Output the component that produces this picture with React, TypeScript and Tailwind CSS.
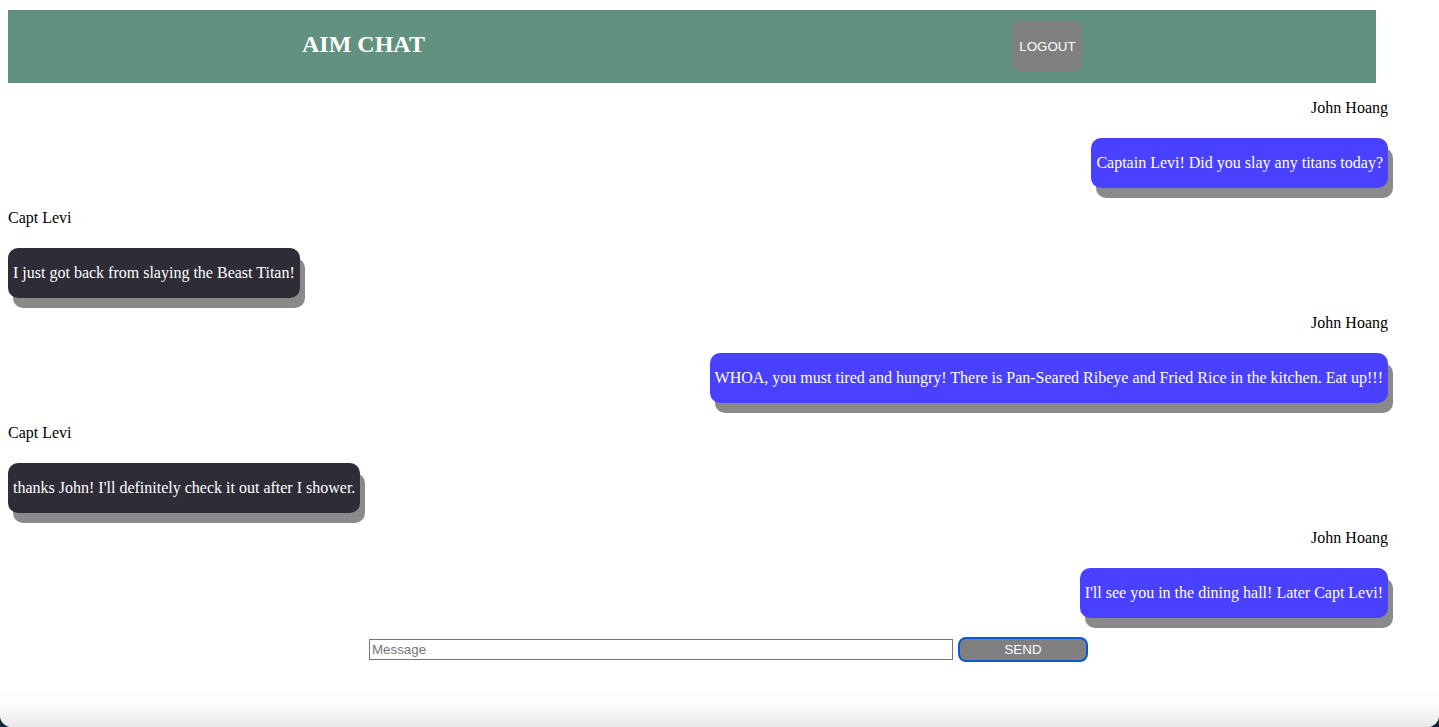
import React from 'react';

type Msg = { from: string; text: string; mine: boolean };

const messages: Msg[] = [
  { from: 'John Hoang', text: 'Captain Levi! Did you slay any titans today?', mine: true },
  { from: 'Capt Levi', text: 'I just got back from slaying the Beast Titan!', mine: false },
  {
    from: 'John Hoang',
    text: 'WHOA, you must tired and hungry! There is Pan-Seared Ribeye and Fried Rice in the kitchen. Eat up!!!',
    mine: true,
  },
  { from: 'Capt Levi', text: "thanks John! I'll definitely check it out after I shower.", mine: false },
  { from: 'John Hoang', text: "I'll see you in the dining hall! Later Capt Levi!", mine: true },
];

const serif = { fontFamily: '"Liberation Serif", "Times New Roman", serif' };

const Message: React.FC<{ msg: Msg; last: boolean }> = ({ msg, last }) => (
  <div className={`${last ? '' : msg.mine ? 'mb-[20px]' : 'mb-[15px]'}`}>
    <div className={`text-[16px] leading-[18px] pt-[1px] text-black ${msg.mine ? 'text-right' : 'text-left'}`}>
      {msg.from}
    </div>
    <div
      className={`mt-[21px] w-fit h-[50px] flex items-center px-[5px] rounded-[10px] text-white text-[16px] leading-[18px] whitespace-nowrap shadow-[5px_10px_0_0_#8a8a8a] ${
        msg.mine ? 'ml-auto bg-[#4a40ff]' : 'bg-[#2e2d37]'
      }`}
    >
      {msg.text}
    </div>
  </div>
);

export default function App() {
  return (
    <div className="min-h-screen bg-[#12263d]">
      <div className="min-h-screen bg-white rounded-b-[12px] flex flex-col overflow-hidden" style={serif}>
        <div className="px-2 pt-[10px]">
          <header className="w-[1368px] h-[73px] bg-[#62917f] flex items-center justify-around">
            <h2 className="text-[24px] font-bold text-white leading-none mb-[5px]">AIM CHAT</h2>
            <button
              className="w-[69px] h-[51px] rounded-[8px] bg-[#808080] text-white text-[13.33px]"
              style={{ fontFamily: '"Liberation Sans", Arial, sans-serif' }}
            >
              LOGOUT
            </button>
          </header>

          <div className="w-[1380px] mt-[15px]">
            {messages.map((m, i) => (
              <Message key={i} msg={m} last={i === messages.length - 1} />
            ))}
          </div>

          <form
            className="mt-[19px] pl-[361px] flex items-center gap-[5px]"
            style={{ fontFamily: '"Liberation Sans", Arial, sans-serif' }}
            onSubmit={(e) => e.preventDefault()}
          >
            <input
              placeholder="Message"
              className="w-[584px] h-[21px] border border-[#767676] px-[2px] text-[13.33px] text-black placeholder:text-[#757575] outline-none"
            />
            <button className="w-[130px] h-[25px] rounded-[8px] border-2 border-[#0a58d6] bg-[#808080] text-white text-[13.33px]">
              SEND
            </button>
          </form>
        </div>

        <div className="mt-auto h-[40px] bg-gradient-to-b from-white via-[#fbfbfb] to-[#e8e8e8]" />
      </div>
    </div>
  );
}
